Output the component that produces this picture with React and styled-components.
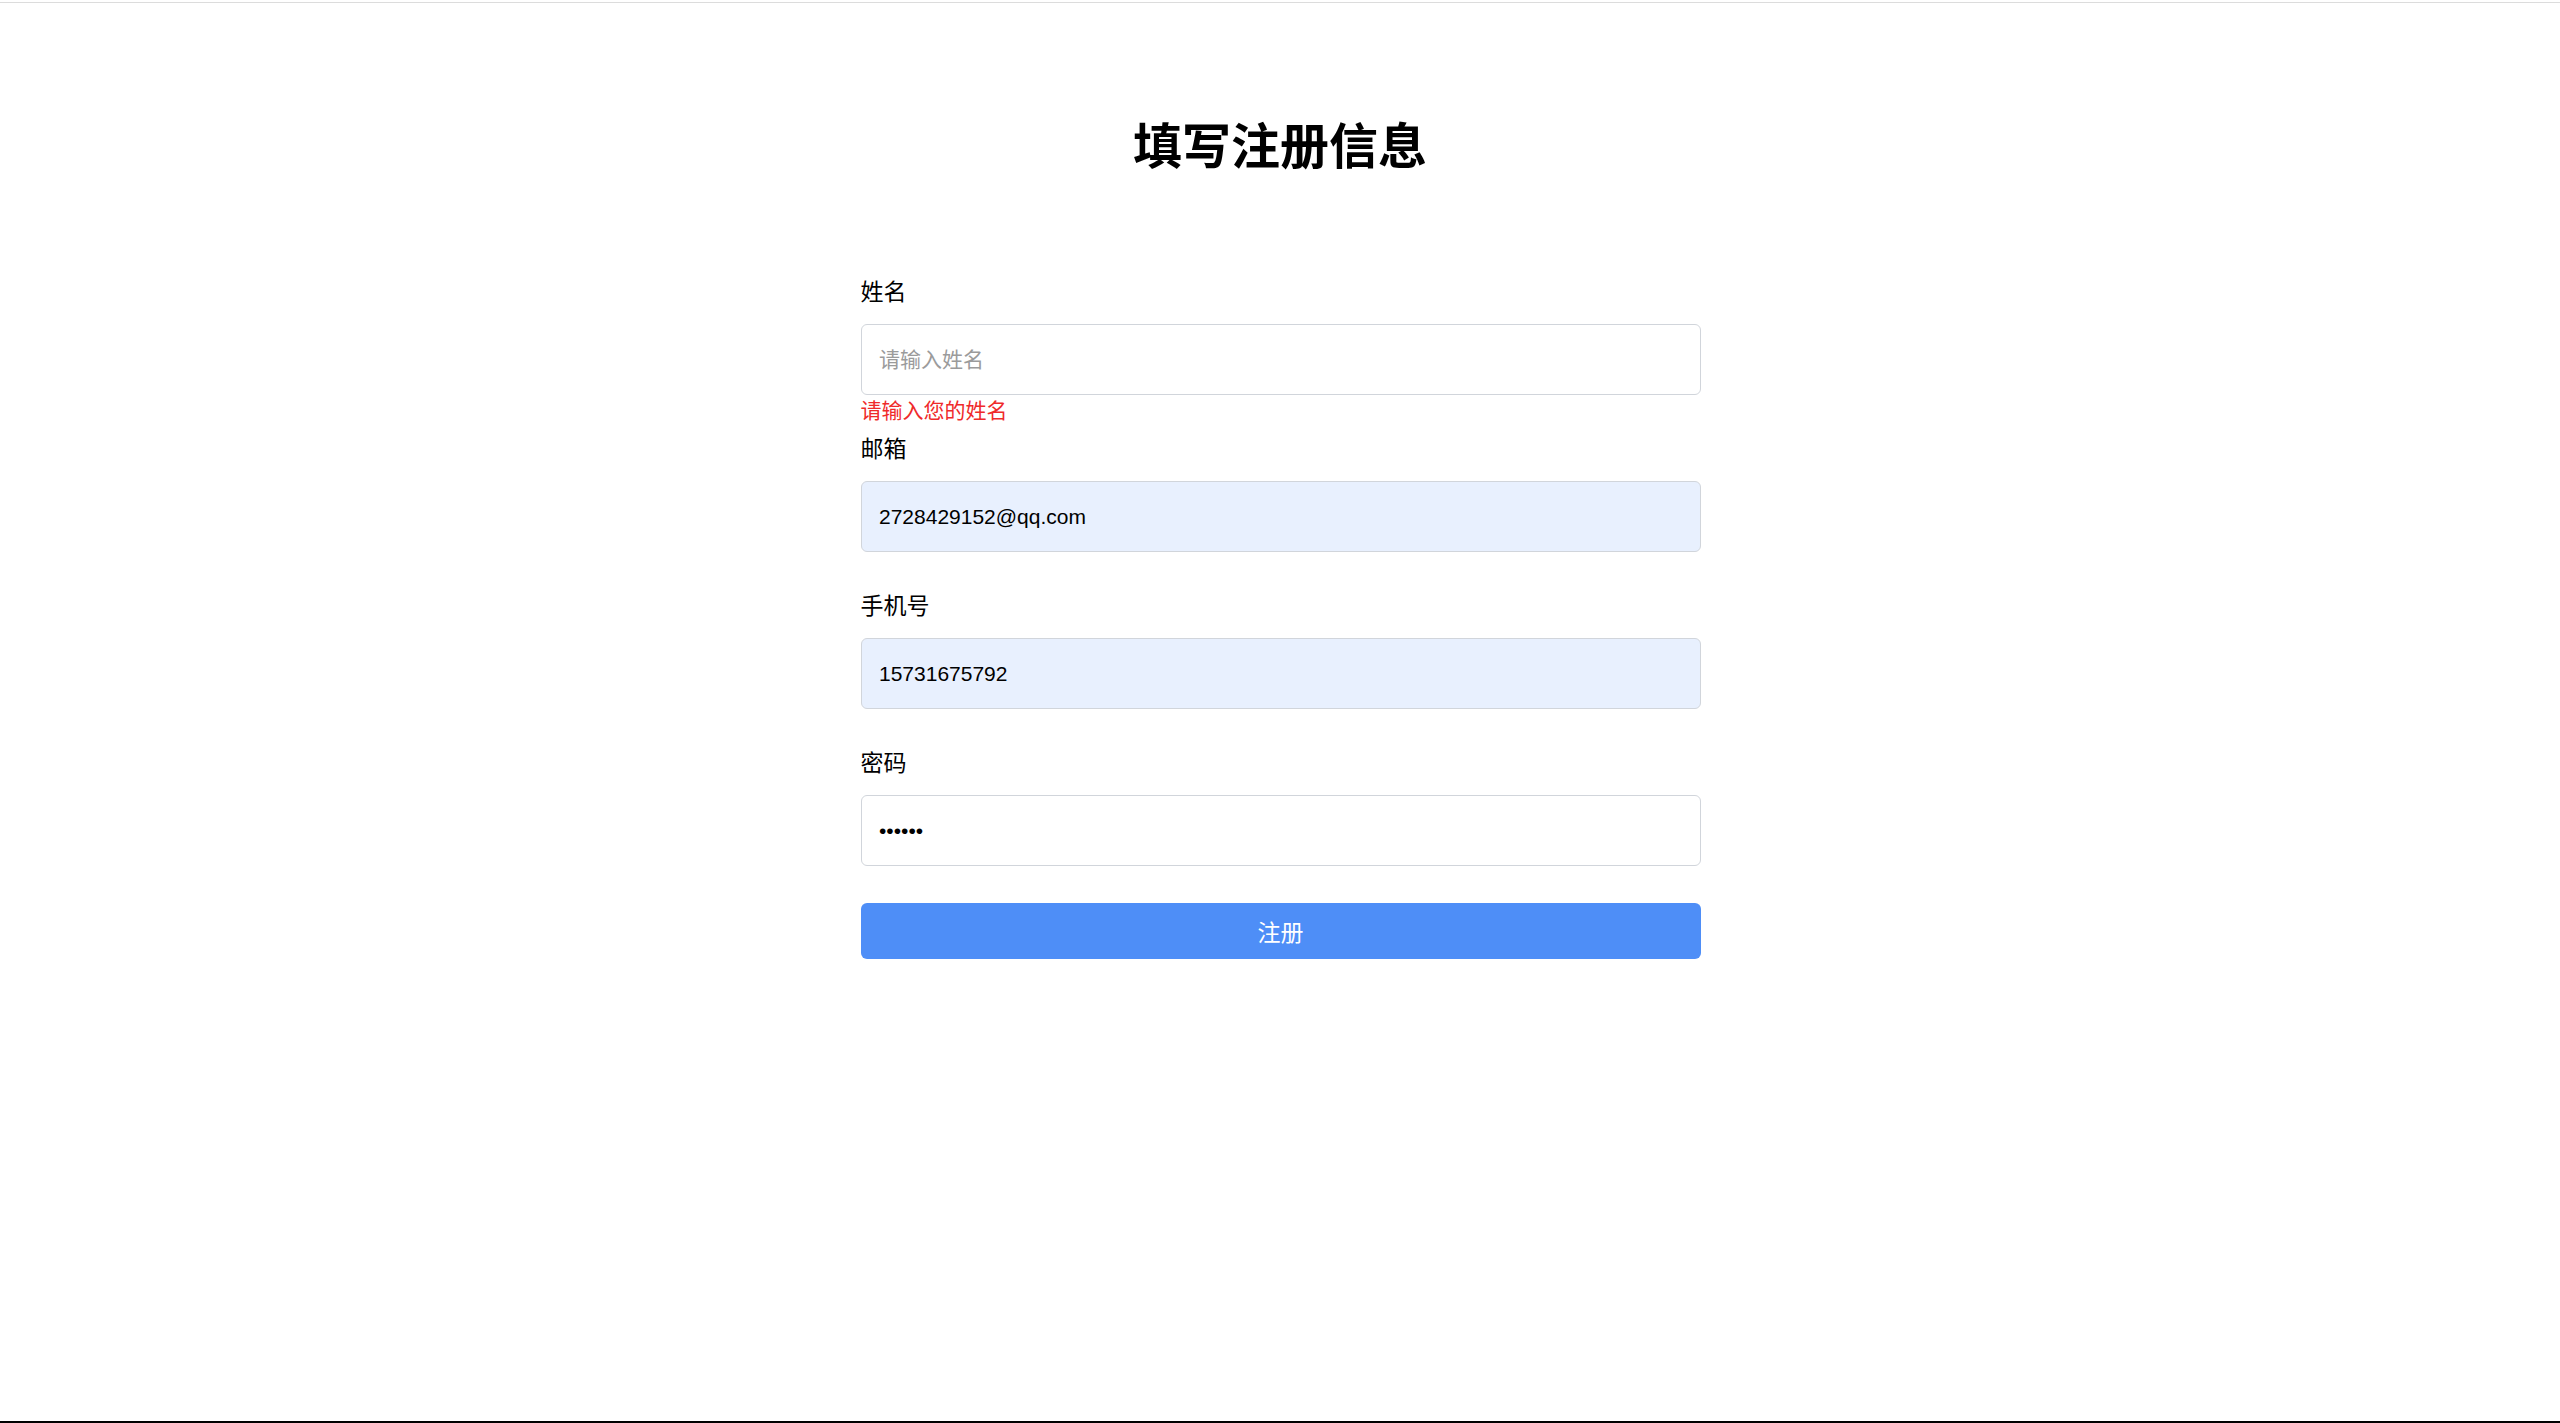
import styled, { createGlobalStyle } from "styled-components";

const GlobalStyle = createGlobalStyle`
  * { box-sizing: border-box; }
  html, body {
    margin: 0;
    padding: 0;
    background: #ffffff;
    font-family: "Liberation Sans", "Noto Sans CJK SC", sans-serif;
  }
`

const Page = styled.div`
  min-height: 100vh;
  display: flex;
  flex-direction: column;
  background: #ffffff;
  border-bottom: 2px solid #000000;
`

const TopRule = styled.div`
  height: 1px;
  margin-top: 2px;
  background: #dcdcdc;
`

const Main = styled.main`
  padding-top: 110px;
  display: flex;
  flex-direction: column;
  align-items: center;
`

const Title = styled.h1`
  margin: 0;
  font-family: "Noto Sans CJK SC", sans-serif;
  font-size: 49px;
  line-height: 59px;
  font-weight: 700;
  color: #000000;
  text-align: center;
`

const Form = styled.form`
  width: 840px;
  margin: 102px 0 0 1px;
  display: flex;
  flex-direction: column;
`

const Field = styled.div`
  display: flex;
  flex-direction: column;
`

const Label = styled.label`
  font-family: "Noto Sans CJK SC", sans-serif;
  font-size: 23px;
  line-height: 32px;
  color: #000000;
  margin-bottom: 18px;
`

const Input = styled.input`
  height: 71px;
  width: 100%;
  padding: 0 17.5px;
  border: 1.5px solid #d1d5db;
  border-radius: 6px;
  background: ${({ $filled }) => ($filled ? "#e8f0fe" : "#ffffff")};
  font-family: "Liberation Sans", "Noto Sans CJK SC", sans-serif;
  font-size: 21px;
  color: #000000;
  outline: none;

  &::placeholder {
    color: #9b9b9b;
    font-family: "Noto Sans CJK SC", sans-serif;
  }
`

const Hint = styled.div`
  height: 36px;
  padding-top: 1px;
  font-family: "Noto Sans CJK SC", sans-serif;
  font-size: 21px;
  line-height: 26px;
  color: #ef2a2a;
`

const Submit = styled.button`
  height: 56px;
  width: 100%;
  margin-top: 1px;
  border: none;
  border-radius: 6px;
  background: #4e8ef7;
  color: #ffffff;
  font-family: "Noto Sans CJK SC", sans-serif;
  font-size: 23px;
  cursor: pointer;
`

const fields = [
  { id: "name", label: "姓名", placeholder: "请输入姓名", value: "", error: "请输入您的姓名" },
  { id: "email", label: "邮箱", value: "2728429152@qq.com", filled: true },
  { id: "phone", label: "手机号", value: "15731675792", filled: true },
  { id: "password", label: "密码", value: "123456", type: "password" },
]

const App = () => {
  return (
    <Page>
      <GlobalStyle />
      <TopRule />
      <Main>
        <Title>填写注册信息</Title>
        <Form onSubmit={(e) => e.preventDefault()}>
          {fields.map((f) => (
            <Field key={f.id}>
              <Label htmlFor={f.id}>{f.label}</Label>
              <Input
                id={f.id}
                type={f.type || "text"}
                placeholder={f.placeholder}
                defaultValue={f.value}
                $filled={f.filled}
              />
              <Hint>{f.error}</Hint>
            </Field>
          ))}
          <Submit type="submit">注册</Submit>
        </Form>
      </Main>
    </Page>
  );
}

export default App;
